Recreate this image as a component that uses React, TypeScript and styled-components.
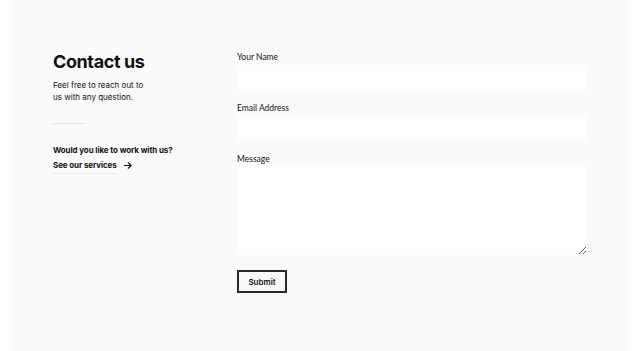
import styled, { createGlobalStyle } from "styled-components";

const GlobalStyle = createGlobalStyle`
  html, body {
    margin: 0;
    padding: 0;
    background: #ffffff;
  }
`;

const Page = styled.div`
  margin: 0 9px;
  min-height: 351px;
  background: #fafafa;
  display: grid;
  grid-template-columns: 184px 350px;
  padding: 51px 0 0 44px;
  box-sizing: border-box;
`;

const Intro = styled.div`
  display: flex;
  flex-direction: column;
  font-family: Inter, "Noto Sans", sans-serif;
  color: #111;
`;

const Heading = styled.h1`
  margin: 0;
  font-size: 18px;
  line-height: 21px;
  font-weight: 700;
  letter-spacing: -0.4px;
`;

const Lead = styled.p`
  margin: 7px 0 0;
  font-size: 8px;
  line-height: 12px;
  width: 96px;
`;

const Divider = styled.hr`
  margin: 20px 0 0;
  width: 32px;
  border: 0;
  border-top: 1px solid #e2e2e2;
`;

const Question = styled.p`
  margin: 20px 0 0;
  font-size: 8px;
  font-weight: 700;
  line-height: 12px;
  letter-spacing: -0.1px;
`;

const ServiceLink = styled.a`
  margin-top: 3px;
  display: flex;
  align-items: center;
  gap: 6px;
  font-size: 8px;
  font-weight: 700;
  letter-spacing: -0.1px;
  color: #111;
  text-decoration: none;
  line-height: 12px;
  width: max-content;

  span {
    border-bottom: 1px solid #e8e8e8;
    padding-bottom: 2px;
  }

  svg {
    margin-bottom: 3px;
  }
`;

const Form = styled.form`
  display: flex;
  flex-direction: column;
  font-family: Lato, "Noto Sans", sans-serif;
`;

const Field = styled.div`
  display: flex;
  flex-direction: column;
  margin-bottom: 13px;
`;

const Label = styled.label`
  font-size: 8.5px;
  line-height: 12px;
  color: #111;
  margin-bottom: 2px;
`;

const Input = styled.input`
  height: 24px;
  border: 0;
  background: #fff;
  padding: 0 8px;
  box-sizing: border-box;
  outline: none;
`;

const TextArea = styled.textarea`
  height: 88px;
  border: 0;
  background: #fff;
  box-sizing: border-box;
  outline: none;
  resize: vertical;
`;

const Submit = styled.button`
  margin-top: 2px;
  width: 50px;
  height: 23px;
  border: 2px solid #2a2a2a;
  background: transparent;
  font-family: Inter, "Noto Sans", sans-serif;
  font-weight: 600;
  font-size: 8px;
  color: #111;
  padding: 0;
`;

const App = () => {
  return (
    <>
      <GlobalStyle />
      <Page>
        <Intro>
          <Heading>Contact us</Heading>
          <Lead>Feel free to reach out to us with any question.</Lead>
          <Divider />
          <Question>Would you like to work with us?</Question>
          <ServiceLink href="#">
            <span>See our services</span>
            <svg width="9" height="9" viewBox="0 0 10 10" fill="none" stroke="#111" strokeWidth="1.3">
              <path d="M1 5h8M5.5 1.5L9 5l-3.5 3.5" />
            </svg>
          </ServiceLink>
        </Intro>
        <Form>
          <Field>
            <Label>Your Name</Label>
            <Input />
          </Field>
          <Field>
            <Label>Email Address</Label>
            <Input />
          </Field>
          <Field>
            <Label>Message</Label>
            <TextArea />
          </Field>
          <Submit type="button">Submit</Submit>
        </Form>
      </Page>
    </>
  );
};

export default App;
